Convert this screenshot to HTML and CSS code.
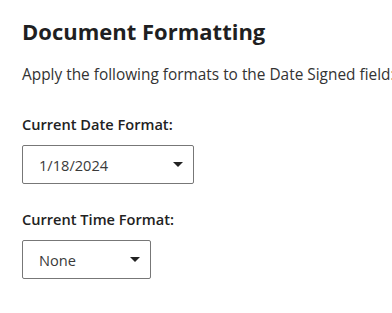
FILE: index.html
```html
<!DOCTYPE html>
<html>
<head>
<meta charset="utf-8">
<link rel="stylesheet" href="styles.css">
</head>
<body>
<div class="page">
  <h1 class="title">Document Formatting</h1>
  <p class="desc">Apply the following formats to the Date Signed field:</p>
  <div class="field">
    <label class="label">Current Date Format:</label>
    <div class="select select-date">
      <span class="value">1/18/2024</span>
      <span class="caret"></span>
    </div>
  </div>
  <div class="field field-time">
    <label class="label">Current Time Format:</label>
    <div class="select select-time">
      <span class="value">None</span>
      <span class="caret"></span>
    </div>
  </div>
</div>
</body>
</html>
```
FILE: styles.css
```css
html, body {
  margin: 0;
  padding: 0;
  background: #fff;
  overflow: hidden;
}
.page {
  padding: 17px 0 0 22px;
  font-family: "Open Sans", "Noto Sans", sans-serif;
  color: #2b2b2b;
  white-space: nowrap;
}
.title {
  margin: 0;
  font-size: 22px;
  line-height: 28px;
  font-weight: 700;
  color: #1f1f22;
}
.desc {
  margin: 20px 0 0;
  font-size: 15.4px;
  line-height: 20px;
  color: #333;
}
.field {
  display: flex;
  flex-direction: column;
  align-items: flex-start;
}
.label {
  margin-top: 30px;
  font-size: 14.6px;
  line-height: 18px;
  font-weight: 600;
  color: #222;
}
.field-time .label {
  margin-top: 26px;
}
.select {
  margin-top: 12px;
  box-sizing: border-box;
  height: 39px;
  border: 1px solid #777;
  border-radius: 2px;
  display: flex;
  align-items: center;
  justify-content: space-between;
  padding: 0 10px 0 16px;
}
.select-date { width: 172px; }
.select-time { width: 129px; }
.value {
  font-size: 14.6px;
  color: #3a3a3a;
}
.caret {
  width: 0;
  height: 0;
  border-left: 5px solid transparent;
  border-right: 5px solid transparent;
  border-top: 5px solid #222;
}
```
